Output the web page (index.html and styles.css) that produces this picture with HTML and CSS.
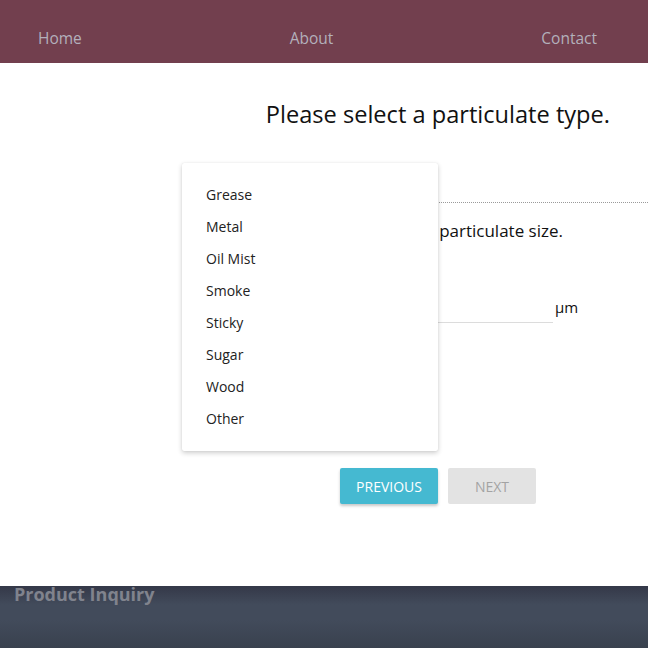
FILE: index.html
```html
<!DOCTYPE html>
<html>
<head>
<meta charset="utf-8">
<link rel="stylesheet" href="styles.css">
</head>
<body>
<nav class="nav">
  <a class="nav-link" href="#">Home</a>
  <a class="nav-link" href="#">About</a>
  <a class="nav-link" href="#">Contact</a>
</nav>
<main class="main">
  <h1 class="title">Please select a particulate type.</h1>
  <div class="select-field"></div>
  <p class="size-label">Please select a particulate size.</p>
  <div class="size-row">
    <div class="size-input"></div>
    <span class="unit">µm</span>
  </div>
  <div class="buttons">
    <button class="btn btn-prev">PREVIOUS</button>
    <button class="btn btn-next">NEXT</button>
  </div>
  <ul class="menu">
    <li class="menu-item">Grease</li>
    <li class="menu-item">Metal</li>
    <li class="menu-item">Oil Mist</li>
    <li class="menu-item">Smoke</li>
    <li class="menu-item">Sticky</li>
    <li class="menu-item">Sugar</li>
    <li class="menu-item">Wood</li>
    <li class="menu-item">Other</li>
  </ul>
</main>
<footer class="footer">
  <h3 class="footer-title">Product Inquiry</h3>
</footer>
</body>
</html>
```
FILE: styles.css
```css
* { box-sizing: border-box; }
html, body { margin: 0; padding: 0; }
body {
  font-family: "Open Sans", "Noto Sans", sans-serif;
  width: 648px;
  height: 648px;
  overflow: hidden;
  background: #fff;
}
.nav {
  height: 63px;
  background: #723f4e;
  display: flex;
  justify-content: space-between;
  align-items: center;
  padding: 12px 51px 0 38px;
}
.nav-link {
  color: #b3b0bb;
  text-decoration: none;
  font-size: 15.5px;
}
.main {
  position: relative;
  height: 523px;
  padding-top: 36px;
}
.title {
  margin: 0;
  font-weight: 400;
  font-size: 23.6px;
  line-height: 30px;
  text-align: right;
  padding-right: 38px;
  color: #111;
}
.select-field {
  margin: 62px 0 0 200px;
  height: 12px;
  border-bottom: 1px dotted #9a9a9a;
}
.size-label {
  margin: 16px 0 0 0;
  text-align: right;
  padding-right: 85px;
  font-size: 17px;
  line-height: 24px;
  color: #111;
}
.size-row {
  display: flex;
  align-items: flex-end;
  margin: 0 0 0 200px;
  height: 80px;
}
.size-input {
  width: 353px;
  height: 1px;
  background: #dcdcdc;
}
.unit {
  font-size: 15px;
  color: #111;
  margin: 0 0 4px 2px;
  line-height: 20px;
  position: relative;
  top: -2px;
}
.buttons {
  display: flex;
  gap: 10px;
  margin: 145px 0 0 340px;
}
.btn {
  border: none;
  border-radius: 2px;
  height: 36px;
  font-family: "Open Sans", "Noto Sans", sans-serif;
  font-size: 14px;
  padding: 0;
}
.btn-prev {
  width: 98px;
  background: #45b9d1;
  color: #fff;
  box-shadow: 0 2px 3px rgba(0,0,0,0.22);
}
.btn-next {
  width: 88px;
  background: #e3e3e3;
  color: #a3a3a3;
}
.menu {
  position: absolute;
  left: 182px;
  top: 100px;
  width: 256px;
  margin: 0;
  padding: 16px 0;
  list-style: none;
  background: #fff;
  border-radius: 2px;
  box-shadow: 0 2px 5px rgba(0,0,0,0.2), 0 0 1px rgba(0,0,0,0.12);
}
.menu-item {
  height: 32px;
  line-height: 32px;
  padding-left: 24px;
  font-size: 14px;
  color: #222;
}
.footer {
  height: 62px;
  overflow: hidden;
  background: linear-gradient(#343848 0%, #424b5b 30%, #424b5b 55%, #39414e 100%);
  padding-left: 14px;
}
.footer-title {
  margin: -4px 0 0 0;
  font-size: 18px;
  font-weight: 700;
  color: #80838d;
  line-height: 24px;
}
```
